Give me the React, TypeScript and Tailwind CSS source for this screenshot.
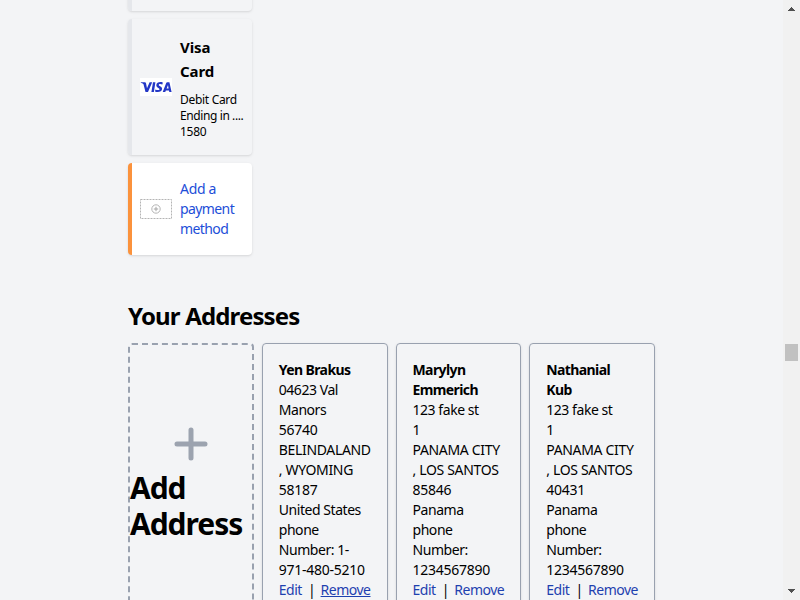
import React from "react";

type Line = { text: string; kind?: "bold" | "caps" | "digits" };

const addresses: { lines: Line[]; removeHover?: boolean }[] = [
  {
    removeHover: true,
    lines: [
      { text: "Yen Brakus", kind: "bold" },
      { text: "04623 Val" },
      { text: "Manors" },
      { text: "56740", kind: "digits" },
      { text: "BELINDALAND", kind: "caps" },
      { text: ", WYOMING", kind: "caps" },
      { text: "58187", kind: "digits" },
      { text: "United States" },
      { text: "phone" },
      { text: "Number: 1-" },
      { text: "971-480-5210", kind: "digits" },
    ],
  },
  {
    lines: [
      { text: "Marylyn", kind: "bold" },
      { text: "Emmerich", kind: "bold" },
      { text: "123 fake st" },
      { text: "1", kind: "digits" },
      { text: "PANAMA CITY", kind: "caps" },
      { text: ", LOS SANTOS", kind: "caps" },
      { text: "85846", kind: "digits" },
      { text: "Panama" },
      { text: "phone" },
      { text: "Number:" },
      { text: "1234567890", kind: "digits" },
    ],
  },
  {
    lines: [
      { text: "Nathanial", kind: "bold" },
      { text: "Kub", kind: "bold" },
      { text: "123 fake st" },
      { text: "1", kind: "digits" },
      { text: "PANAMA CITY", kind: "caps" },
      { text: ", LOS SANTOS", kind: "caps" },
      { text: "40431", kind: "digits" },
      { text: "Panama" },
      { text: "phone" },
      { text: "Number:" },
      { text: "1234567890", kind: "digits" },
    ],
  },
];

const lineStyles = {
  bold: "font-bold tracking-[-0.6px]",
  caps: "tracking-[-0.33px]",
  digits: "tracking-[-0.25px]",
  plain: "tracking-[-0.45px]",
};

function VisaLogo() {
  return (
    <svg className="h-[18px] w-8 shrink-0" viewBox="0 0 32 18">
      <rect width="32" height="18" fill="#fff" />
      <g fill="#2337c6">
        <path d="M0.8 4.2H4.8Q5.8 4.2 6 5.2L7 10.2L9.6 4.2H12.2L8 14H5.5L3.5 6.3Q3.2 5.3 0.8 4.8Z" />
        <path d="M13 4.2H15.4L13.9 14H11.4Z" />
        <path d="M22.8 4.5L22.4 6.6C20.6 5.8 18.8 5.9 18.8 6.9C18.8 8 22.1 8.2 22.1 10.8C22.1 14.1 17.8 14.7 15 13.6L15.4 11.4C17.5 12.4 19.5 12.2 19.5 11.2C19.5 10 16.3 9.9 16.3 7.3C16.3 4 20.4 3.5 22.8 4.5Z" />
        <path fillRule="evenodd" d="M27.2 4.2H29.4L31.6 14H29.3L29 12.4H25.9L25.2 14H22.7L26.2 5Q26.5 4.2 27.2 4.2ZM28 7L26.6 10.5H28.6Z" />
      </g>
    </svg>
  );
}

function AddCardIcon() {
  return (
    <svg className="h-5 w-8 shrink-0" viewBox="0 0 32 20" fill="none">
      <rect x="0.5" y="0.5" width="31" height="19" stroke="#b4b4b4" strokeDasharray="2 1" />
      <circle cx="16" cy="10" r="4.2" stroke="#b5b5b5" />
      <path d="M13.8 10H18.2M16 7.8V12.2" stroke="#a5a5a5" />
    </svg>
  );
}

function AddressCard({ lines, removeHover }: { lines: Line[]; removeHover?: boolean }) {
  return (
    <div className="h-[300px] rounded border border-gray-400 p-4 text-[14px] leading-5 whitespace-nowrap shadow-sm">
      {lines.map((line, i) => (
        <p key={i} className={lineStyles[line.kind ?? "plain"]}>
          {line.text}
        </p>
      ))}
      <div className="flex tracking-[-0.5px] text-[#1e40af]">
        <a className="w-[30px]">Edit</a>
        <span className="w-[13px] text-black">|</span>
        <a className={removeHover ? "underline" : ""}>Remove</a>
      </div>
    </div>
  );
}

export default function App() {
  return (
    <div className="flex h-[600px] w-[800px] overflow-hidden bg-gray-100 font-['Noto_Sans','Open_Sans',sans-serif] text-black">
      <main className="w-[783px] pl-32">
        <div className="w-[124px]">
          <div className="-mt-2 h-[19px] rounded border-l-4 border-gray-200 shadow" />
          <div className="mt-2 flex h-[136px] items-center gap-2 rounded border-l-4 border-gray-200 px-2 whitespace-nowrap shadow">
            <VisaLogo />
            <div>
              <p className="text-[15px] leading-6 font-bold tracking-[-0.1px]">Visa</p>
              <p className="text-[15px] leading-6 font-bold tracking-[-0.1px]">Card</p>
              <div className="mt-[9px] -mb-px text-xs leading-4 tracking-[-0.4px]">
                <p className="tracking-[-0.3px]">Debit Card</p>
                <p>Ending in ....</p>
                <p className="tracking-[-0.3px]">1580</p>
              </div>
            </div>
          </div>
          <div className="mt-2 flex h-[92px] items-center gap-2 rounded border-l-4 border-[#fb923c] bg-white px-2 shadow">
            <AddCardIcon />
            <div className="text-[14px] leading-5 tracking-[-0.6px] text-[#1d4ed8]">
              <p className="tracking-[-0.3px]">Add a</p>
              <p>payment</p>
              <p>method</p>
            </div>
          </div>
        </div>
        <h2 className="mt-[45px] text-[24px] leading-8 font-bold tracking-[-0.85px]">Your Addresses</h2>
        <div className="mt-[11px] grid w-[527px] grid-cols-4 gap-2">
          <div className="h-[300px] rounded border-2 border-dashed border-gray-400 pt-[77px]">
            <svg className="mx-auto h-11 w-11" viewBox="0 0 44 44" fill="none" stroke="#9ca3af" strokeWidth="5" strokeLinecap="round">
              <path d="M22 8V36M8 22H36" />
            </svg>
            <p className="mt-1 text-[30px] leading-9 font-bold tracking-[-1.05px]">Add Address</p>
          </div>
          {addresses.map((address, i) => (
            <AddressCard key={i} {...address} />
          ))}
        </div>
      </main>
      <aside className="flex w-[17px] flex-col items-center bg-[#f1f1f1] pt-[7px] pb-[7px]">
        <svg className="h-1 w-[7px]" viewBox="0 0 7 4" shapeRendering="crispEdges">
          <path d="M3 0h1v1h1v1h1v1h1v1H0V3h1V2h1V1h1Z" fill="#505050" />
        </svg>
        <div className="mt-[333px] h-[17px] w-[13px] bg-[#c1c1c1]" />
        <svg className="mt-auto h-1 w-[7px]" viewBox="0 0 7 4" shapeRendering="crispEdges">
          <path d="M0 0h7v1H6v1H5v1H4v1H3V3H2V2H1V1H0Z" fill="#505050" />
        </svg>
      </aside>
    </div>
  );
}
